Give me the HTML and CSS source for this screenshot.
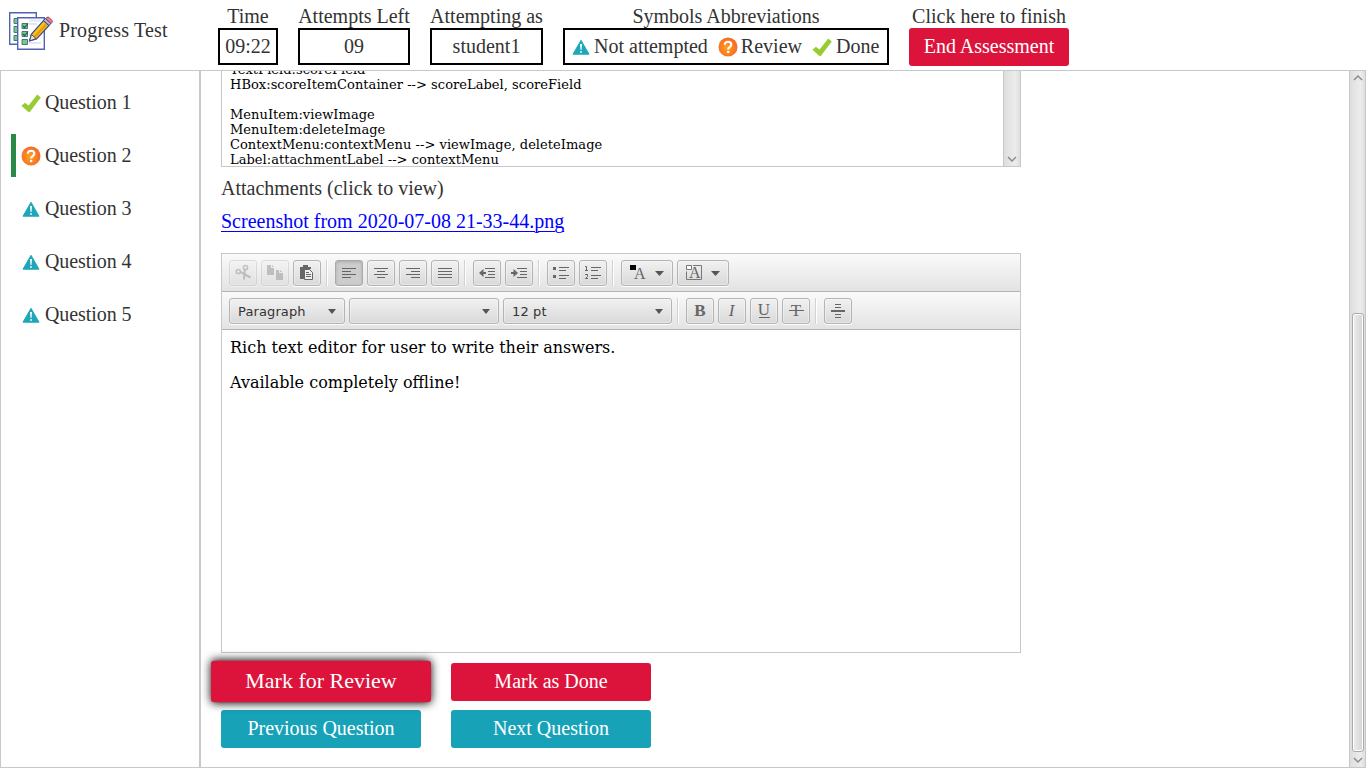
FILE: index.html
```html
<!DOCTYPE html>
<html lang="en">
<head>
<meta charset="utf-8">
<title>Progress Test</title>
<link rel="stylesheet" href="styles.css">
</head>
<body>
<svg class="defs" width="0" height="0">
  <defs>
    <radialGradient id="orange" cx=".45" cy=".55" r=".6"><stop offset="0" stop-color="#ffa51c"/><stop offset="1" stop-color="#f5622a"/></radialGradient>
    <symbol id="warn" viewBox="0 0 20 20"><path d="M10 3.300 18 17.200H2Z" fill="#1ea6b9" stroke="#1ea6b9" stroke-width="1" stroke-linejoin="round"/><path d="M9 7h2l-.5 6h-1z" fill="#fff"/><circle cx="10" cy="15" r=".9" fill="#fff"/></symbol>
    <symbol id="review" viewBox="0 0 20 20"><circle cx="10" cy="10" r="9.500" fill="url(#orange)"/><path d="M6.800 7.800C6.800 5.800 8.100 4.700 10 4.700s3.300 1.100 3.300 2.900c0 2.600-3.100 2.400-3.100 4.900" fill="none" stroke="#fff" stroke-width="2.100"/><circle cx="10.200" cy="15" r="1.300" fill="#fff"/></symbol>
    <symbol id="done" viewBox="0 0 20 20"><path d="M.4 12.800 3.900 9.700 7.600 12.500 16.200 1.600 19.800 4.400 9.200 18.500Q8 19.500 6.800 18.500Z" fill="#99cc33"/></symbol>
  </defs>
</svg>
<div class="app">
  <header class="header">
    <div class="brand">
      <svg class="logo" viewBox="0 0 44 40"><g fill="#fff" stroke="#5362b3" stroke-width="1.4"><path d="M.7 1.7H27.3V33.3H.7Z"/><path d="M8.7 6.7H35.3V38.3H8.7Z"/></g><path d="M20 9.5h12M20 13h8M20 24h4M20 32h12" stroke="#e1e8f5" stroke-width="2"/><g fill="#73c88c" stroke="#437b72" stroke-width="1"><path d="M8 7.500H5v5h3M8 15.500H5v6h3M8 24.500H5v5h3M13 12.500h5.500v5H13zM13 20.500h5.500v5H13zM13 28.500h5.500v5H13z"/></g><path d="M14 15l1.600 1.500 3.500-4M14 23l1.600 1.500 3.500-4" fill="none" stroke="#29445f" stroke-width="1.100"/><path d="M20.500 30 22.500 23 34.500 9.500l5.500 5L27.500 28Z" fill="#fdc11d" stroke="#394c86" stroke-width="1.200"/><path d="M25.500 26 37.500 13" stroke="#e69b13" stroke-width="2.400"/><path d="M20.500 30 22.500 23.500 27 27.500Z" fill="#fce2bd" stroke="#394c86" stroke-width="1"/><path d="M34.500 9.500l2-2 5.500 5-2 2Z" fill="#a4b8dd" stroke="#394c86"/><path d="M36.500 7.500l1.500-1q1-.8 2 0l3 3q.7 1 0 2L42 12.500Z" fill="#f47e8d" stroke="#8a3d64"/></svg>
      <span>Progress Test</span>
    </div>
    <div class="info"><span>Time</span><div class="box time">09:22</div></div>
    <div class="info"><span>Attempts Left</span><div class="box attempts">09</div></div>
    <div class="info"><span>Attempting as</span><div class="box user">student1</div></div>
    <div class="info"><span>Symbols Abbreviations</span>
      <div class="box legend">
        <span class="key"><svg class="icon"><use href="#warn"/></svg>Not attempted</span>
        <span class="key"><svg class="icon"><use href="#review"/></svg>Review</span>
        <span class="key last"><svg class="icon"><use href="#done"/></svg>Done</span>
      </div>
    </div>
    <div class="info"><span>Click here to finish</span><button class="btn end">End Assessment</button></div>
  </header>
  <div class="body">
    <nav class="sidebar">
      <a class="question"><svg class="icon"><use href="#done"/></svg><span>Question 1</span></a>
      <a class="question current"><svg class="icon"><use href="#review"/></svg><span>Question 2</span></a>
      <a class="question"><svg class="icon"><use href="#warn"/></svg><span>Question 3</span></a>
      <a class="question"><svg class="icon"><use href="#warn"/></svg><span>Question 4</span></a>
      <a class="question"><svg class="icon"><use href="#warn"/></svg><span>Question 5</span></a>
    </nav>
    <main class="content">
      <div class="statement">
        <pre class="code">TextField:scoreField
HBox:scoreItemContainer --&gt; scoreLabel, scoreField

MenuItem:viewImage
MenuItem:deleteImage
ContextMenu:contextMenu --&gt; viewImage, deleteImage
Label:attachmentLabel --&gt; contextMenu</pre>
        <div class="track inner"><svg class="chev" viewBox="0 0 10 6"><path d="M1 1l4 4 4-4"/></svg></div>
      </div>
      <div class="attach-title">Attachments (click to view)</div>
      <a class="attachment">Screenshot from 2020-07-08 21-33-44.png</a>
      <section class="editor">
        <div class="toolbar">
          <span class="tool disabled"><svg viewBox="0 0 28 26"><g fill="none" stroke="#777" stroke-width="1.500"><circle cx="16.500" cy="7.500" r="2.100"/><circle cx="9.300" cy="11.500" r="2.100"/><path d="M15.800 9.500 15 19.500M11.500 12 21.500 17.500" stroke-width="2"/></g></svg></span>
          <span class="tool disabled"><svg viewBox="0 0 28 26"><path d="M6 5h4v3h3v7H6zM11 5l2 2h-2zM15 10h3v3h4v7h-7zM19 10l2 2h-2z" fill="#777"/></svg></span>
          <span class="tool"><svg viewBox="0 0 28 26"><path d="M7 7h3V5h5v2h3v2h-6v10H7z" fill="#666"/><path d="M11.500 9.500h5l3 3v7h-8z" fill="#eee" stroke="#666"/><path d="M13 12.500h3M13 14.500h5M13 16.500h5" stroke="#666"/></svg></span>
          <i class="sep"></i>
          <span class="tool pressed"><svg viewBox="0 0 28 26"><path class="line" d="M7 8.500h14M7 11.500h9M7 14.500h14M7 17.500h9"/></svg></span>
          <span class="tool"><svg viewBox="0 0 28 26"><path class="line" d="M7 8.500h14M10 11.500h8M7 14.500h14M10 17.500h8"/></svg></span>
          <span class="tool"><svg viewBox="0 0 28 26"><path class="line" d="M7 8.500h14M12 11.500h9M7 14.500h14M12 17.500h9"/></svg></span>
          <span class="tool"><svg viewBox="0 0 28 26"><path class="line" d="M7 8.500h14M7 11.500h14M7 14.500h14M7 17.500h14"/></svg></span>
          <i class="sep"></i>
          <span class="tool"><svg viewBox="0 0 28 26"><path class="line" d="M12 8.500h10M15 11.500h7M15 14.500h7M12 17.500h10"/><path d="M6 13l4.500-4v3H13v2h-2.500v3z" fill="#666"/></svg></span>
          <span class="tool"><svg viewBox="0 0 28 26"><path class="line" d="M12 8.500h10M15 11.500h7M15 14.500h7M12 17.500h10"/><path d="M13 13 8.500 9v3H6v2h2.500v3z" fill="#666"/></svg></span>
          <i class="sep"></i>
          <span class="tool"><svg viewBox="0 0 28 26"><path class="line" d="M12 7.500h10M12 10.500h7M12 15.500h10M12 18.500h7"/><path d="M6 7h3v3H6zM6 15h3v3H6z" fill="#666"/></svg></span>
          <span class="tool"><svg viewBox="0 0 28 26"><path class="line" d="M12 7.500h10M12 10.500h7M12 15.500h10M12 18.500h7"/><path d="M6 6.500h1.500v4M6 10.500h3M6 14.500h2.500v2L6.500 18.500H9" fill="none" stroke="#666"/></svg></span>
          <i class="sep"></i>
          <span class="tool menu"><svg viewBox="0 0 52 26"><path d="M9 5h6v5H9z"/><text x="13" y="19">A</text><path d="M34 11h9l-4.500 5z" fill="#555"/></svg></span>
          <span class="tool menu"><svg viewBox="0 0 52 26"><path d="M16 5.500h8.500v14h-15v-8" fill="none" stroke="#777"/><path d="M9.500 5.500h5v4h-5z" fill="#fff" stroke="#777"/><text x="12" y="18">A</text><path d="M34 11h9l-4.500 5z" fill="#555"/></svg></span>
        </div>
        <div class="toolbar">
          <span class="combo format">Paragraph<i class="arrow"></i></span>
          <span class="combo family"><i class="arrow"></i></span>
          <span class="combo size">12 pt<i class="arrow"></i></span>
          <i class="sep"></i>
          <span class="tool"><svg viewBox="0 0 28 26"><text class="glyph bold" x="14" y="18">B</text></svg></span>
          <span class="tool"><svg viewBox="0 0 28 26"><text class="glyph italic" x="13.500" y="18">I</text></svg></span>
          <span class="tool"><svg viewBox="0 0 28 26"><text class="glyph" x="14" y="17">U</text><path class="line" d="M9 19.500h11"/></svg></span>
          <span class="tool"><svg viewBox="0 0 28 26"><text class="glyph" x="14" y="18">T</text><path class="line" d="M7 12.500h15"/></svg></span>
          <i class="sep"></i>
          <span class="tool"><svg viewBox="0 0 28 26"><path class="line" d="M11 6.500h6M11 9.500h6M11 16.500h6M11 19.500h6"/><path d="M7 12h14v2H7z" fill="#666"/></svg></span>
        </div>
        <div class="page"><p>Rich text editor for user to write their answers.</p><p>Available completely offline!</p></div>
      </section>
      <div class="actions">
        <button class="btn focus">Mark for Review</button>
        <button class="btn">Mark as Done</button>
        <button class="btn teal">Previous Question</button>
        <button class="btn teal">Next Question</button>
      </div>
    </main>
    <div class="track outer">
      <svg class="chev" viewBox="0 0 10 6"><path d="M1 5l4-4 4 4"/></svg>
      <div class="thumb"></div>
      <svg class="chev" viewBox="0 0 10 6"><path d="M1 1l4 4 4-4"/></svg>
    </div>
  </div>
</div>
</body>
</html>
```
FILE: styles.css
```css
* { box-sizing: border-box; }
body { margin: 0; background: #fff; color: #333; font: 20px/22px "Liberation Serif", serif; overflow: hidden; }
.defs { position: absolute; }
.app { width: 1366px; height: 768px; display: flex; flex-direction: column; }
.header { height: 70px; display: flex; gap: 20px; }
.brand { width: 198px; padding: 11px 0 0 9px; display: flex; gap: 6px; line-height: 38px; letter-spacing: .17px; white-space: nowrap; }
.logo { width: 44px; height: 40px; flex: none; }
.info { display: flex; flex-direction: column; align-items: center; padding-top: 5px; white-space: nowrap; }
.info > span { height: 23px; flex: none; }
.box { height: 37px; border: 2px solid #000; line-height: 32px; text-align: center; }
.time { width: 60px; }
.attempts { width: 112px; }
.user { width: 113px; }
.legend { width: 326px; display: flex; gap: 10px; padding-left: 6px; }
.key { display: flex; height: 32px; align-items: center; gap: 3px; }
.key .icon { margin-top: 2px; }
.key.last { gap: 4px; }
.icon { width: 20px; height: 20px; flex: none; }
.btn { border: 0; border-radius: 3px; background: #dc143c; color: #fff; width: 200px; height: 38px; padding: 0 0 2px; font: 20px/36px "Liberation Serif", serif; }
.end { width: 160px; }
.body { flex: 1; display: flex; border: 1px solid #c8c8c8; min-height: 0; }
.sidebar { width: 200px; border-right: 2px solid #c8c8c8; padding: 10px 0 0 10px; display: flex; flex-direction: column; gap: 10px; }
.question { height: 43px; display: flex; align-items: center; gap: 4px; padding-left: 5px; border-left: 5px solid transparent; letter-spacing: -.08px; }
.question span { padding-bottom: 2px; }
.current { border-left-color: #2a8947; }
.content { flex: 1; padding-left: 20px; }
.statement { width: 800px; height: 96px; display: flex; justify-content: space-between; border: 1px solid #c8c8c8; border-top: 0; overflow: hidden; }
.code { margin: -9px 0 0 8px; color: #000; font: 13px/15px "DejaVu Serif", serif; letter-spacing: .04px; }
.track { background: linear-gradient(90deg, #dedede, #ececec 70%, #dedede); border-left: 1px solid #c8c8c8; display: flex; flex-direction: column; align-items: center; }
.inner { width: 17px; justify-content: flex-end; padding-bottom: 4px; }
.outer { width: 16px; padding: 4px 0; gap: 5px; }
.chev { width: 10px; height: 6px; flex: none; fill: none; stroke: #888; stroke-width: 1.4; }
.thumb { width: 12px; height: 439px; margin-top: auto; border: 1px solid #aaa; border-radius: 3px; background: linear-gradient(90deg, #ededed, #d4d4d4); box-shadow: inset 0 0 0 1px #fff; }
.attach-title { padding-top: 10px; height: 43px; }
.attachment { display: block; height: 43px; color: #00f; text-decoration: underline; text-decoration-thickness: 1px; text-underline-offset: 3px; }
.editor { width: 800px; height: 400px; border: 1px solid #c8c8c8; }
.toolbar { height: 38px; display: flex; gap: 4px; padding: 6px 7px; border-bottom: 1px solid #b5b5b5; background: linear-gradient(#fafafa, #e3e3e3); }
.tool, .combo { height: 26px; border: 1px solid #b4b4b4; border-radius: 3px; background: linear-gradient(#f1f1f1, #d9d9d9); box-shadow: inset 0 0 0 1px rgba(255,255,255,.35), 0 1px #fff; }
.tool { width: 28px; }
.tool svg { display: block; width: 28px; height: 26px; margin: -1px; }
.tool.menu, .tool.menu svg { width: 52px; }
.tool text { font: 16px "Liberation Serif", serif; fill: #666; }
.disabled { opacity: .4; }
.pressed { background: #cdcdcd; border-color: #aaa; box-shadow: inset 0 1px 3px #aaa, 0 1px #fff; }
.line { fill: none; stroke: #666; stroke-width: 1; }
.sep { width: 6px; height: 26px; border-left: 1px solid transparent; background: linear-gradient(90deg, #d2d2d2 1px, #fff 1px, #fff 2px, transparent 2px); }
.combo { display: flex; align-items: center; padding: 0 8px; font: 13px "DejaVu Sans", sans-serif; letter-spacing: .12px; }
.format { width: 116px; }
.family { width: 150px; }
.size { width: 169px; }
.arrow { margin-left: auto; border: 4.5px solid transparent; border-top: 5px solid #555; border-bottom: 0; }
.tool .glyph { font-size: 17px; text-anchor: middle; }
.tool .bold { font-weight: bold; }
.tool .italic { font-style: italic; }
.page { padding: 8px; color: #000; font: 16px/19px "DejaVu Serif", serif; }
.page p { margin: 0 0 16px; }
.actions { display: grid; grid-template-columns: 200px 200px; gap: 9px 30px; padding-top: 10px; }
.teal { background: #17a2b8; }
.focus { transform: translateY(-.5px) scale(1.1, 1.09); box-shadow: 0 0 9px #000; }
```
